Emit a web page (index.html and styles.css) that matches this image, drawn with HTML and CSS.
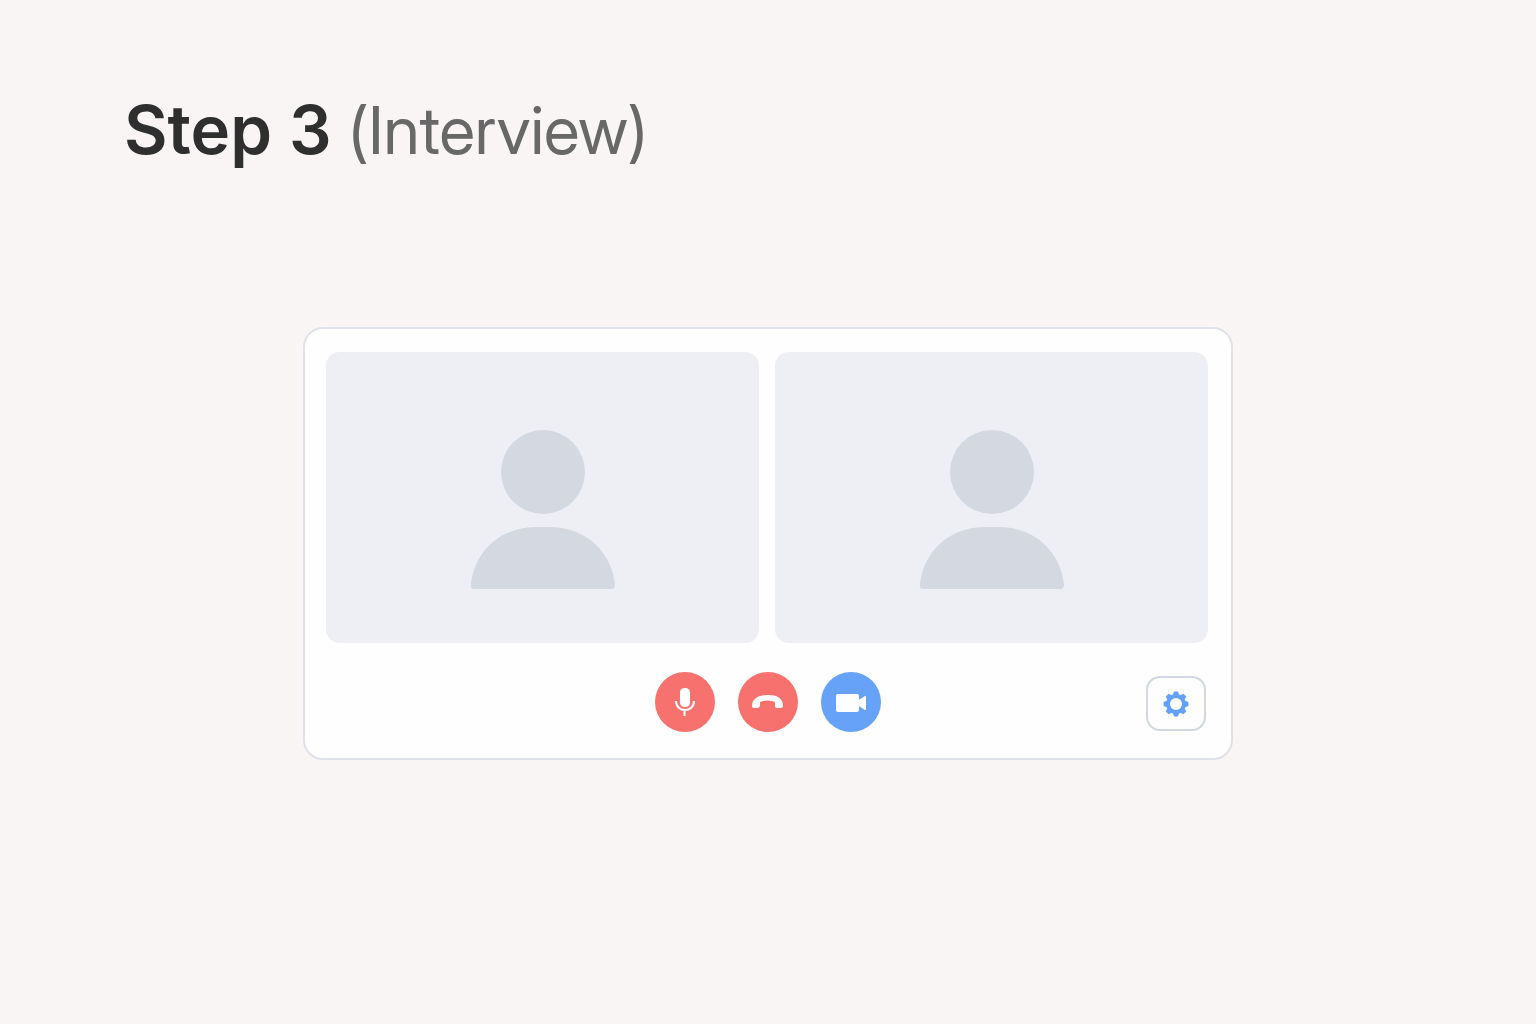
FILE: index.html
```html
<!DOCTYPE html>
<html lang="en">
<head>
<meta charset="utf-8">
<meta name="viewport" content="width=device-width, initial-scale=1">
<title>Step 3 (Interview)</title>
<link rel="stylesheet" href="styles.css">
</head>
<body>
<main class="page">
  <h1 class="title">Step 3 <span class="title-note">(Interview)</span></h1>
  <section class="call" aria-label="Video call">
    <div class="tiles">
      <div class="tile">
        <svg class="avatar" viewBox="0 0 146 160" aria-hidden="true">
          <circle cx="73" cy="42" r="42"/>
          <path d="M64 97H82C116 98 142 122 145 155Q145 159 141 159H4Q0 159 1 154C5 120 31 98 64 97Z"/>
        </svg>
      </div>
      <div class="tile">
        <svg class="avatar" viewBox="0 0 146 160" aria-hidden="true">
          <circle cx="73" cy="42" r="42"/>
          <path d="M64 97H82C116 98 142 122 145 155Q145 159 141 159H4Q0 159 1 154C5 120 31 98 64 97Z"/>
        </svg>
      </div>
    </div>
    <div class="bar">
      <div class="controls">
        <button class="control control-red" type="button" aria-label="Microphone">
          <svg class="icon" viewBox="0 0 60 60" aria-hidden="true">
            <rect x="25" y="16" width="10" height="19" rx="4.500" fill="#fff"/>
            <path d="M21 29C21 41 39 41 39 29M29.500 38V44" fill="none" stroke="#fff" stroke-width="2"/>
          </svg>
        </button>
        <button class="control control-red" type="button" aria-label="Hang up">
          <svg class="icon" viewBox="0 0 60 60" aria-hidden="true">
            <path d="M14 34C14 26 21 23 30 23S45 26 45 34Q45 36 43 36H39Q37 36 37 34V30Q30 27 22 30V33Q22 36 19 36H16Q14 36 14 34Z" fill="#fff"/>
          </svg>
        </button>
        <button class="control control-blue" type="button" aria-label="Camera">
          <svg class="icon" viewBox="0 0 60 60" aria-hidden="true">
            <rect x="15" y="22" width="23" height="18" rx="2" fill="#fff"/>
            <path d="M37 28.500L44 24Q45 23.500 45 25V37Q45 38.500 44 38L37 33.500Z" fill="#fff"/>
          </svg>
        </button>
      </div>
      <button class="settings" type="button" aria-label="Settings">
        <svg class="gear" viewBox="0 0 26 26" aria-hidden="true">
          <circle cx="13" cy="13" r="8" fill="none" stroke="#64a2f8" stroke-width="4"/>
          <g fill="#64a2f8">
            <path id="teeth" d="M9.500 5L11 .500H15L16.500 5ZM9.500 21L11 25.500H15L16.500 21ZM5 9.500L.500 11V15L5 16.500ZM21 9.500L25.500 11V15L21 16.500Z"/>
            <use href="#teeth" transform="rotate(45 13 13)"/>
          </g>
        </svg>
      </button>
    </div>
  </section>
</main>
</body>
</html>
```
FILE: styles.css
```css
* { box-sizing: border-box; }

body {
  margin: 0;
  background: #f8f5f4;
  color: #2f2f2f;
  font-family: Inter, "Liberation Sans", sans-serif;
}

.page { padding: 86px 24px 48px; }

.title {
  margin: 0 100px;
  font-size: 67px;
  line-height: 88px;
  font-weight: 600;
  font-variant-ligatures: no-contextual;
}

.title-note {
  color: #686868;
  font-family: "Inter Display", Inter, "Liberation Sans", sans-serif;
  font-size: 66px;
  font-weight: 400;
}

.call {
  max-width: 930px;
  margin: 153px auto 0;
  padding: 23px 23px 26px 21px;
  background: #fefefe;
  border: 2px solid #e0e2e9;
  border-radius: 20px;
}

.tiles {
  display: grid;
  grid-template-columns: 1fr 1fr;
  gap: 16px;
}

.tile {
  display: flex;
  justify-content: center;
  padding: 78px 0 53px;
  background: #eeeff4;
  border-radius: 14px;
}

.avatar {
  width: 146px;
  height: 160px;
  fill: #d3d8e1;
}

.bar {
  display: grid;
  grid-template-columns: 1fr auto 1fr;
  align-items: center;
  margin-top: 29px;
  padding: 0 2px 0 4px;
}

.controls {
  display: flex;
  grid-column: 2;
  gap: 23px;
}

.control {
  width: 60px;
  height: 60px;
  padding: 0;
  border: 0;
  border-radius: 50%;
}

.control-red { background: #f7716e; }
.control-blue { background: #66a3f8; }

.icon {
  display: block;
  width: 60px;
  height: 60px;
}

.settings {
  display: flex;
  align-items: center;
  justify-content: center;
  justify-self: end;
  width: 60px;
  height: 55px;
  margin-top: 3px;
  padding: 0;
  background: #fefefe;
  border: 2px solid #d3d7e3;
  border-radius: 14px;
}

.gear {
  width: 26px;
  height: 26px;
}
```
